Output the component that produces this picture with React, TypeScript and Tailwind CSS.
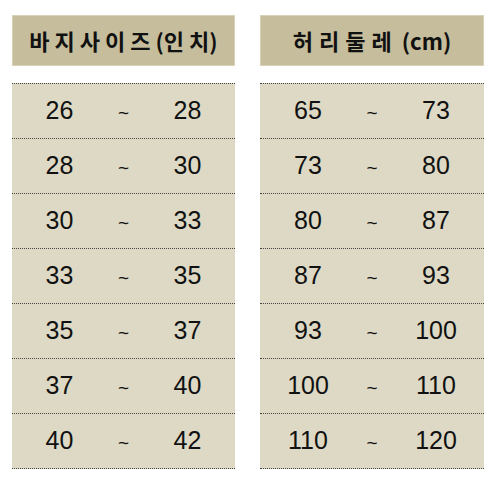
const pants = [
  ["26", "28"],
  ["28", "30"],
  ["30", "33"],
  ["33", "35"],
  ["35", "37"],
  ["37", "40"],
  ["40", "42"],
];

const waist = [
  ["65", "73"],
  ["73", "80"],
  ["80", "87"],
  ["87", "93"],
  ["93", "100"],
  ["100", "110"],
  ["110", "120"],
];

function SizeTable({ title, rows, width }: { title: React.ReactNode; rows: string[][]; width: string }) {
  return (
    <div className={`flex flex-col ${width}`}>
      <div className="flex h-[51px] items-center justify-center border border-[#d8d2b8] bg-[#c5bd9b] text-[22px] font-bold text-[#111] [font-family:'Noto_Sans_CJK_KR',sans-serif]">
        {title}
      </div>
      <div className="mt-[17px] border-b border-dotted border-[#444] bg-[#ddd9c5]">
        {rows.map(([from, to]) => (
          <div
            key={from}
            className="grid h-[55px] grid-cols-[64px_64px_64px] items-center justify-center border-t border-dotted border-[#444] text-center text-[25px] text-[#111] [font-family:'Liberation_Sans',Arial,sans-serif]"
          >
            <span>{from}</span>
            <span className="translate-y-[2px] text-[19px]">~</span>
            <span>{to}</span>
          </div>
        ))}
      </div>
    </div>
  );
}

export default function App() {
  return (
    <div className="flex h-[485px] w-[500px] gap-[25px] bg-white pl-[12px] pt-[15px]">
      <SizeTable
        title={
          <>
            <span className="tracking-[5px]">바지사이즈</span>
            <span>(</span>
            <span className="tracking-[5px]">인</span>
            <span>치)</span>
          </>
        }
        rows={pants}
        width="w-[223px]"
      />
      <SizeTable
        title={
          <>
            <span className="tracking-[6px]">허리둘레</span>
            <span className="ml-[4px]">(cm)</span>
          </>
        }
        rows={waist}
        width="w-[224px]"
      />
    </div>
  );
}
